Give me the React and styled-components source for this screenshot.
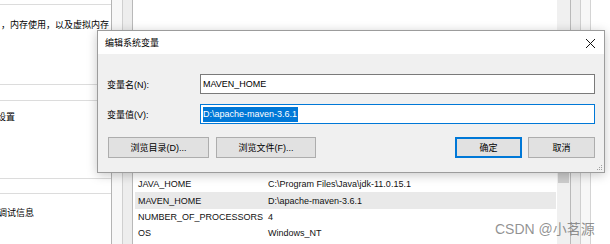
import styled, { createGlobalStyle } from "styled-components"

const FONT = `"Liberation Sans", "Noto Sans CJK SC", sans-serif`

const GlobalStyle = createGlobalStyle`
  html, body {
    margin: 0;
    padding: 0;
    background: #fff;
  }
  body {
    font-family: ${FONT};
    font-size: 9px;
    color: #000;
  }
`

const rows = [
  { name: "ComSpec", value: "C:\\Windows\\system32\\cmd.exe" },
  { name: "DriverData", value: "C:\\Windows\\System32\\Drivers\\DriverData" },
  { name: "JAVA_HOME", value: "C:\\Program Files\\Java\\jdk-11.0.15.1" },
  { name: "MAVEN_HOME", value: "D:\\apache-maven-3.6.1", selected: true },
  { name: "NUMBER_OF_PROCESSORS", value: "4" },
  { name: "OS", value: "Windows_NT" },
]

export default function App() {
  return (
    <>
      <GlobalStyle />
      <Stage>
        <LeftPane>
          <Group $top={4} $height={81}>
            <Desc $indent={1}>，内存使用，以及虚拟内存</Desc>
          </Group>
          <Group $top={15} $height={79}>
            <Desc $indent={-3} $pad={10}>设置</Desc>
          </Group>
          <Group $top={14} $height={60}>
            <Desc $indent={-2} $pad={13}>调试信息</Desc>
          </Group>
        </LeftPane>

        <EnvWindow>
          <Frame>
            <List>
              <Rows>
                {rows.map((r) => (
                  <Row key={r.name} $selected={r.selected}>
                    <NameCell>{r.name}</NameCell>
                    <span>{r.value}</span>
                  </Row>
                ))}
              </Rows>
              <ScrollBar>
                <Thumb />
              </ScrollBar>
            </List>
          </Frame>
        </EnvWindow>

        <Dialog>
          <TitleBar>
            <span>编辑系统变量</span>
            <CloseIcon width="11" height="11" viewBox="0 0 11 11">
              <path d="M1 1 L10 10 M10 1 L1 10" stroke="#111" strokeWidth="1" fill="none" />
            </CloseIcon>
          </TitleBar>
          <Body>
            <Field>
              <Label>变量名(N):</Label>
              <TextBox>MAVEN_HOME</TextBox>
            </Field>
            <Field>
              <Label>变量值(V):</Label>
              <TextBox $focused>
                <Selected>D:\apache-maven-3.6.1</Selected>
              </TextBox>
            </Field>
            <ButtonRow>
              <Group2>
                <Button $width={101}>浏览目录(D)...</Button>
                <Button $width={100}>浏览文件(F)...</Button>
              </Group2>
              <Group2 $gap={6}>
                <Button $width={67} $default>确定</Button>
                <Button $width={67}>取消</Button>
              </Group2>
            </ButtonRow>
          </Body>
          <Grip width="7" height="7" viewBox="0 0 7 7">
            <rect x="5" y="1" width="1" height="1" fill="#a0a0a0" />
            <rect x="3" y="3" width="1" height="1" fill="#a0a0a0" />
            <rect x="5" y="3" width="1" height="1" fill="#a0a0a0" />
            <rect x="1" y="5" width="1" height="1" fill="#a0a0a0" />
            <rect x="3" y="5" width="1" height="1" fill="#a0a0a0" />
            <rect x="5" y="5" width="1" height="1" fill="#a0a0a0" />
          </Grip>
        </Dialog>

        <Watermark>CSDN @小茗源</Watermark>
      </Stage>
    </>
  )
}

const Stage = styled.div`
  position: relative;
  width: 610px;
  height: 244px;
  overflow: hidden;
  display: flex;
  background: #fff;
`
const LeftPane = styled.div`
  flex: none;
  width: 111px;
  background: #fff;
  border-right: 1px solid #b4b4b4;
  display: flex;
  flex-direction: column;
  overflow: hidden;
`
const Group = styled.div`
  flex: none;
  margin-top: ${({ $top }) => $top}px;
  height: ${({ $height }) => $height}px;
  border-top: 1px solid #dcdcdc;
  border-bottom: 1px solid #dcdcdc;
  box-sizing: border-box;
`
const Desc = styled.div`
  white-space: nowrap;
  margin-left: ${({ $indent }) => $indent}px;
  padding-top: ${({ $pad }) => $pad ?? 14}px;
  line-height: 12px;
`
const EnvWindow = styled.div`
  flex: none;
  width: 479px;
  box-sizing: border-box;
  background: #f7f7f7;
  border-right: 1px solid #d4d4d4;
  padding: 0 9px 0 10px;
  display: flex;
`
const Frame = styled.div`
  flex: 1;
  background: #ededed;
  border-left: 1px solid #cfcfcf;
  border-right: 1px solid #cfcfcf;
  padding: 0 9px;
  display: flex;
`
const List = styled.div`
  flex: 1;
  background: #fff;
  border-left: 1px solid #b9b9b9;
  border-right: 1px solid #b9b9b9;
  display: flex;
`
const Rows = styled.div`
  flex: 1;
  padding-top: 143.2px;
  display: flex;
  flex-direction: column;
`
const Row = styled.div`
  height: 16.4px;
  flex: none;
  margin: 0 1px 0 2px;
  padding-left: 3px;
  display: flex;
  align-items: center;
  white-space: nowrap;
  color: #111;
  background: ${({ $selected }) => ($selected ? "#e9e9e9" : "transparent")};
`
const NameCell = styled.span`
  flex: none;
  width: 130px;
`
const ScrollBar = styled.div`
  flex: none;
  width: 13px;
  background: #f0f0f0;
  padding-top: 172px;
`
const Thumb = styled.div`
  height: 11px;
  margin: 0 1px;
  background: #cdcdcd;
`
const Dialog = styled.div`
  position: absolute;
  left: 97px;
  top: 30px;
  width: 508px;
  height: 143px;
  box-sizing: border-box;
  border: 1px solid #9c9c9c;
  background: #f0f0f0;
  box-shadow: 0 2px 10px rgba(0, 0, 0, 0.22);
  display: flex;
  flex-direction: column;
`
const TitleBar = styled.div`
  height: 23px;
  flex: none;
  background: #fff;
  display: flex;
  align-items: center;
  justify-content: space-between;
  padding: 0 8px 0 7px;
  color: #000;
`
const CloseIcon = styled.svg`
  display: block;
  margin-top: 1px;
`
const Body = styled.div`
  flex: 1;
  padding: 20px 9px 0 9px;
  display: flex;
  flex-direction: column;
  gap: 10px;
`
const Field = styled.div`
  display: grid;
  grid-template-columns: 93px 1fr;
  align-items: center;
`
const Label = styled.span`
  color: #000;
`
const TextBox = styled.div`
  height: 20px;
  box-sizing: border-box;
  border: 1px solid ${({ $focused }) => ($focused ? "#0078d7" : "#7a7a7a")};
  background: #fff;
  padding-left: 2px;
  display: flex;
  align-items: center;
  color: #000;
`
const Selected = styled.span`
  background: #0078d7;
  color: #fff;
  line-height: 15px;
  padding: 0 1px 0 0;
`
const ButtonRow = styled.div`
  margin-top: 3px;
  display: flex;
  justify-content: space-between;
  padding-left: 1px;
`
const Group2 = styled.div`
  display: flex;
  gap: ${({ $gap }) => $gap ?? 7}px;
`
const Button = styled.div`
  width: ${({ $width }) => $width}px;
  height: 21px;
  box-sizing: border-box;
  background: #e1e1e1;
  border: ${({ $default }) => ($default ? "2px solid #0078d7" : "1px solid #adadad")};
  display: flex;
  align-items: center;
  justify-content: center;
  color: #000;
`
const Grip = styled.svg`
  position: absolute;
  right: 1px;
  bottom: 1px;
`
const Watermark = styled.div`
  position: absolute;
  left: 495px;
  top: 220px;
  font-size: 14px;
  line-height: 18px;
  color: rgba(110, 110, 110, 0.75);
  white-space: nowrap;
`
